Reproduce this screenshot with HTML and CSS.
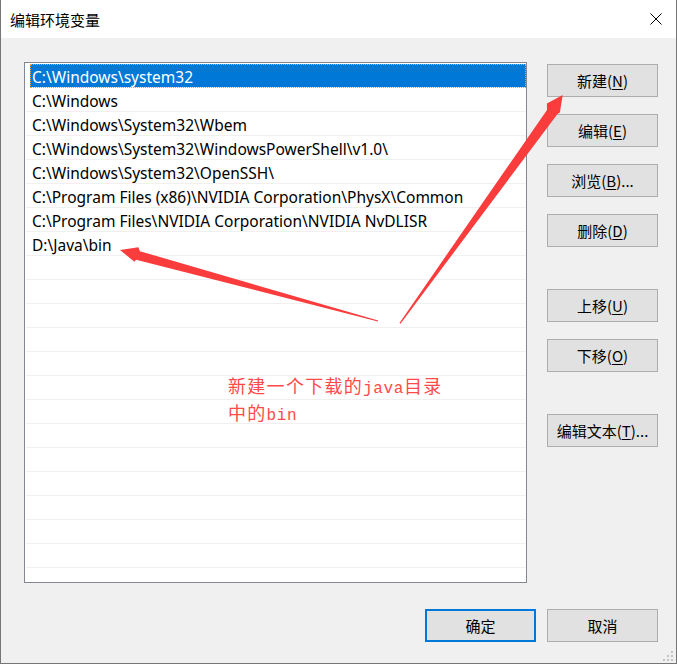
FILE: index.html
```html
<!DOCTYPE html>
<html>
    <head>
        <meta charset="UTF-8">
        <meta name="viewport" content="width=device-width, initial-scale=1.0">
        <title>编辑环境变量</title>
        <link rel="stylesheet" href="styles.css">
    </head>
    <body>
        <div class="window">
            <div class="titlebar">
                <span class="title">编辑环境变量</span>
                <svg class="close" width="12" height="12" viewBox="0 0 12 12">
                    <path d="M0.5 0.5 L11.5 11.5 M11.5 0.5 L0.5 11.5" stroke="#000" stroke-width="1" fill="none"/>
                </svg>
            </div>

            <div class="content">
                <div class="main">
                    <div class="path-list">
                        <div class="row selected">C:\Windows\system32</div>
                        <div class="row">C:\Windows</div>
                        <div class="row">C:\Windows\System32\Wbem</div>
                        <div class="row">C:\Windows\System32\WindowsPowerShell\v1.0\</div>
                        <div class="row">C:\Windows\System32\OpenSSH\</div>
                        <div class="row">C:\Program Files (x86)\NVIDIA Corporation\PhysX\Common</div>
                        <div class="row">C:\Program Files\NVIDIA Corporation\NVIDIA NvDLISR</div>
                        <div class="row">D:\Java\bin</div>
                        <div class="row"></div>
                        <div class="row"></div>
                        <div class="row"></div>
                        <div class="row"></div>
                        <div class="row"></div>
                        <div class="row"></div>
                        <div class="row"></div>
                        <div class="row"></div>
                        <div class="row"></div>
                        <div class="row"></div>
                        <div class="row"></div>
                        <div class="row"></div>
                        <div class="row"></div>
                        <div class="row"></div>
                    </div>

                    <div class="side">
                        <div class="btn-group">
                            <button class="btn">新建(<u>N</u>)</button>
                            <button class="btn">编辑(<u>E</u>)</button>
                            <button class="btn">浏览(<u>B</u>)...</button>
                            <button class="btn">删除(<u>D</u>)</button>
                        </div>
                        <div class="btn-group">
                            <button class="btn">上移(<u>U</u>)</button>
                            <button class="btn">下移(<u>O</u>)</button>
                        </div>
                        <div class="btn-group">
                            <button class="btn">编辑文本(<u>T</u>)...</button>
                        </div>
                    </div>
                </div>

                <div class="footer">
                    <button class="btn default">确定</button>
                    <button class="btn">取消</button>
                </div>
            </div>

            <!-- annotations drawn over the dialog -->
            <svg class="marks" width="677" height="664" viewBox="0 0 677 664">
                <polygon fill="#fa3c3c" points="400.5,323.7 557.5,114.0 559.9,112.6 562.7,95 546.9,103.4 547.0,109.9 399.5,322.9"/>
                <polygon fill="#fa3c3c" points="378.1,320.5 139.9,251.2 138.4,247.3 120,250 134.4,261.7 136.1,259.7 377.9,321.5"/>
            </svg>

            <div class="note">
                新建一个下载的<span class="mono">java</span>目录<br>
                中的<span class="mono">bin</span>
            </div>

            <svg class="grip" width="12" height="12" viewBox="0 0 12 12">
                <rect x="9" y="1" width="2" height="2" fill="#c4c4c4"/>
                <rect x="5" y="5" width="2" height="2" fill="#c4c4c4"/>
                <rect x="9" y="5" width="2" height="2" fill="#c4c4c4"/>
                <rect x="1" y="9" width="2" height="2" fill="#c4c4c4"/>
                <rect x="5" y="9" width="2" height="2" fill="#c4c4c4"/>
                <rect x="9" y="9" width="2" height="2" fill="#c4c4c4"/>
            </svg>
        </div>
    </body>
</html>
```

FILE: styles.css
```css
body {
    margin: 0;
    padding: 0;
    font-family: "Noto Sans", "Noto Sans CJK SC", sans-serif;
    font-size: 15px;
    color: #000000;
    background: #f0f0f0;
}

.window {
    position: relative;
    width: 677px;
    height: 664px;
    box-sizing: border-box;
    border: 1px solid #767676;
    border-top: none;
    background: #f0f0f0;
    overflow: hidden;
}


.titlebar {
    height: 38px;
    background: #ffffff;
    display: flex;
    align-items: center;
    justify-content: space-between;
    padding: 0 14px 0 9px;
}

.title {
    font-family: "Noto Sans CJK SC", sans-serif;
    font-size: 15px;
    line-height: 20px;
    margin-top: 1px;
}

.close {
    display: block;
}


.content {
    padding: 24px 18px 0 23px;
}

.main {
    display: flex;
    gap: 20px;
}

.path-list {
    width: 503px;
    height: 521px;
    box-sizing: border-box;
    border: 1px solid #828790;
    background: #ffffff;
    padding-top: 1px;
    overflow: hidden;
}

.row {
    height: 20px;
    padding-top: 3px;
    line-height: 20px;
    margin-left: 1px;
    padding-left: 6px;
    border-bottom: 1px solid #f0f0f0;
    font-size: 15.5px;
    white-space: nowrap;
}

.row.selected {
    margin-left: 5px;
    padding-left: 2px;
    background: #0078d7;
    color: #ffffff;
    outline: 1px dotted #f0a050;
    outline-offset: -1px;
}


.side {
    display: flex;
    flex-direction: column;
    gap: 42px;
    padding-top: 2px;
}

.btn-group {
    display: flex;
    flex-direction: column;
    gap: 17px;
}

.btn {
    width: 111px;
    height: 33px;
    box-sizing: border-box;
    background: #e1e1e1;
    border: 1px solid #adadad;
    border-radius: 0;
    padding: 0;
    font-family: "Noto Sans CJK SC", sans-serif;
    font-size: 15px;
    color: #000000;
    cursor: pointer;
}

.btn u {
    text-underline-offset: 2px;
}

.btn.default {
    border: 2px solid #0078d7;
}


.footer {
    display: flex;
    justify-content: flex-end;
    gap: 11px;
    margin-top: 26px;
}


.marks {
    position: absolute;
    left: -1px;
    top: 0;
    pointer-events: none;
}

.note {
    position: absolute;
    left: 227px;
    top: 372px;
    font-family: "Noto Sans CJK SC", sans-serif;
    font-size: 18px;
    line-height: 27px;
    letter-spacing: 1.3px;
    color: #ff4a4a;
}

.note .mono {
    font-family: "Liberation Mono", monospace;
    font-size: 16px;
    line-height: 16px;
    letter-spacing: 0.6px;
}

.grip {
    position: absolute;
    right: 2px;
    bottom: 1px;
}
```
